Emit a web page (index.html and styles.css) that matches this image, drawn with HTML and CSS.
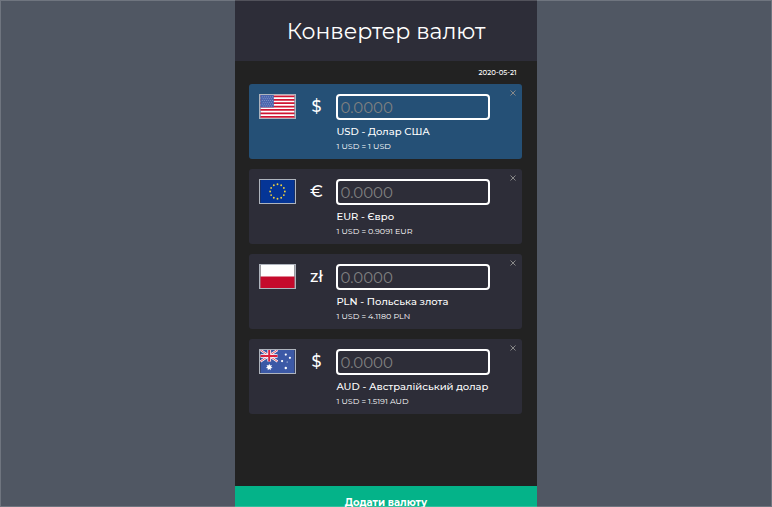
FILE: index.html
```html
<!DOCTYPE html>
<html lang="uk">
<head>
<meta charset="utf-8">
<meta name="viewport" content="width=device-width, initial-scale=1">
<title>Конвертер валют</title>
<link rel="stylesheet" href="styles.css">
</head>
<body>
<div class="app">
  <header class="header"><h1 class="title">Конвертер валют</h1></header>
  <main class="main">
    <time class="date" datetime="2020-05-21">2020-05-21</time>
    <ul class="currencies">
      <li class="card card-base">
        <svg class="flag" viewBox="0 0 37 25" aria-hidden="true">
          <rect width="37" height="25" fill="#fff"/>
          <path d="M0 1.5h37M0 5.2h37M0 8.9h37M0 12.6h37M0 16.3h37M0 20h37M0 23.7h37" stroke="#cf1432" stroke-width="1.9"/>
          <rect width="14.5" height="13.5" fill="#4964ad"/>
          <path d="M1.5 2h12M2.5 4h11M1.5 6h12M2.5 8h11M1.5 10h12M2.5 12h11" stroke="#a9b6dc" stroke-width=".7" stroke-dasharray="1 1.2"/>
        </svg>
        <span class="symbol">$</span>
        <div class="fields">
          <input class="amount" id="usd" type="text" inputmode="decimal" placeholder="0.0000">
          <label class="name" for="usd">USD - Долар США</label>
          <p class="rate">1 USD = 1 USD</p>
        </div>
        <button class="close" type="button" aria-label="Видалити USD"><svg viewBox="0 0 6 6"><path d="M.5.5l5 5M5.5.5l-5 5"/></svg></button>
      </li>
      <li class="card">
        <svg class="flag" viewBox="0 0 37 25" aria-hidden="true">
          <rect width="37" height="25" fill="#053596"/>
          <g fill="#f3d43b">
            <circle cx="18.5" cy="4.6" r="1"/><circle cx="22.5" cy="5.7" r="1"/><circle cx="25.4" cy="8.6" r="1"/><circle cx="26.5" cy="12.5" r="1"/><circle cx="25.4" cy="16.4" r="1"/><circle cx="22.5" cy="19.3" r="1"/><circle cx="18.5" cy="20.4" r="1"/><circle cx="14.5" cy="19.3" r="1"/><circle cx="11.6" cy="16.4" r="1"/><circle cx="10.5" cy="12.5" r="1"/><circle cx="11.6" cy="8.6" r="1"/><circle cx="14.5" cy="5.7" r="1"/>
          </g>
        </svg>
        <span class="symbol">€</span>
        <div class="fields">
          <input class="amount" id="eur" type="text" inputmode="decimal" placeholder="0.0000">
          <label class="name" for="eur">EUR - Євро</label>
          <p class="rate">1 USD = 0.9091 EUR</p>
        </div>
        <button class="close" type="button" aria-label="Видалити EUR"><svg viewBox="0 0 6 6"><path d="M.5.5l5 5M5.5.5l-5 5"/></svg></button>
      </li>
      <li class="card">
        <svg class="flag" viewBox="0 0 37 25" aria-hidden="true">
          <rect width="37" height="25" fill="#fff"/>
          <rect y="12.5" width="37" height="12.5" fill="#c50a2c"/>
        </svg>
        <span class="symbol">zł</span>
        <div class="fields">
          <input class="amount" id="pln" type="text" inputmode="decimal" placeholder="0.0000">
          <label class="name" for="pln">PLN - Польська злота</label>
          <p class="rate">1 USD = 4.1180 PLN</p>
        </div>
        <button class="close" type="button" aria-label="Видалити PLN"><svg viewBox="0 0 6 6"><path d="M.5.5l5 5M5.5.5l-5 5"/></svg></button>
      </li>
      <li class="card">
        <svg class="flag" viewBox="0 0 37 25" aria-hidden="true">
          <rect width="37" height="25" fill="#3c59a6"/>
          <path d="M0 0l18.5 12.5M18.5 0L0 12.5" stroke="#fff" stroke-width="2.4"/>
          <path d="M0 0l18.5 12.5M18.5 0L0 12.5" stroke="#d9304a" stroke-width=".9"/>
          <path d="M9.5 0v12.5M0 6.5h18.5" stroke="#fff" stroke-width="4"/>
          <path d="M9.5 0v12.5M0 6.5h18.5" stroke="#d9203c" stroke-width="2.2"/>
          <path fill="#fff" d="M9.5 15l.9 1.9 2-.6-.9 1.9 1.7 1.3-2.1.4v2.1l-1.6-1.4L7.9 22v-2.1l-2.1-.4 1.7-1.3-.9-1.9 2 .6z"/>
          <g fill="#fff"><circle cx="27.5" cy="5" r="1.2"/><circle cx="23.5" cy="12" r="1.2"/><circle cx="32" cy="8.5" r="1.2"/><circle cx="29" cy="13" r=".6"/><circle cx="27.5" cy="19.5" r="1.3"/></g>
        </svg>
        <span class="symbol">$</span>
        <div class="fields">
          <input class="amount" id="aud" type="text" inputmode="decimal" placeholder="0.0000">
          <label class="name" for="aud">AUD - Австралійський долар</label>
          <p class="rate">1 USD = 1.5191 AUD</p>
        </div>
        <button class="close" type="button" aria-label="Видалити AUD"><svg viewBox="0 0 6 6"><path d="M.5.5l5 5M5.5.5l-5 5"/></svg></button>
      </li>
    </ul>
  </main>
  <button class="add" type="button">Додати валюту</button>
</div>
</body>
</html>
```
FILE: styles.css
```css
* { box-sizing: border-box; }

body {
  margin: 0;
  height: 100vh;
  overflow: hidden;
  background: #505763;
  color: #fff;
  font-family: Montserrat, Inter, "Liberation Sans", sans-serif;
}

/* Thin light frame round the window */
body::after {
  content: "";
  position: fixed;
  inset: 0;
  border: 1px solid rgba(255, 255, 255, 0.18);
  pointer-events: none;
}

.app {
  display: flex;
  flex-direction: column;
  width: 39%;
  min-width: 300px;
  height: calc(100vh + 12px);
  margin: 0 auto;
  background: #222;
}

.header {
  padding: 17px 16px 15px;
  background: #2d2d38;
  text-align: center;
}

.title {
  margin: 0;
  font-size: 22px;
  font-weight: 400;
  line-height: 29px;
}

.main {
  flex: 1;
  padding: 6px 15px 6px 14px;
}

.date {
  display: block;
  padding-right: 5px;
  font-size: 7px;
  font-weight: 500;
  line-height: 12px;
  text-align: right;
}

.currencies {
  display: grid;
  gap: 10px;
  margin: 5px 0 0;
  padding: 0;
  list-style: none;
}

.card {
  position: relative;
  display: flex;
  padding: 10px;
  border-radius: 3px;
  background: #2d2d38;
}

.card-base { background: #255076; }

.flag {
  width: 37px;
  height: 25px;
  border: 1px solid #aeb4bd;
}

.symbol {
  width: 40px;
  font-size: 16px;
  font-weight: 500;
  line-height: 25px;
  text-align: center;
}

.fields {
  display: flex;
  flex: 1;
  flex-direction: column;
  padding-right: 22px;
}

.amount {
  width: 100%;
  height: 26px;
  padding: 0 2px;
  border: 2px solid #fff;
  border-radius: 4px;
  background: transparent;
  color: #fff;
  font: inherit;
  font-size: 15px;
}

.amount::placeholder { color: #808080; }

.name {
  margin-top: 5px;
  font-size: 10px;
  font-weight: 500;
  line-height: 14px;
  white-space: nowrap;
}

.rate {
  margin: 0 0 -4px;
  padding-top: 1px;
  font-size: 8px;
  line-height: 13px;
}

.close {
  position: absolute;
  top: 6px;
  right: 6px;
  display: flex;
  padding: 0;
  border: 0;
  background: none;
  color: #888;
}

.close svg {
  width: 6px;
  height: 6px;
  fill: none;
  stroke: currentColor;
}

.add {
  padding: 9px;
  border: 0;
  background: #04b389;
  color: #fff;
  font: inherit;
  font-size: 10px;
  font-weight: 700;
  line-height: 15px;
}
```
